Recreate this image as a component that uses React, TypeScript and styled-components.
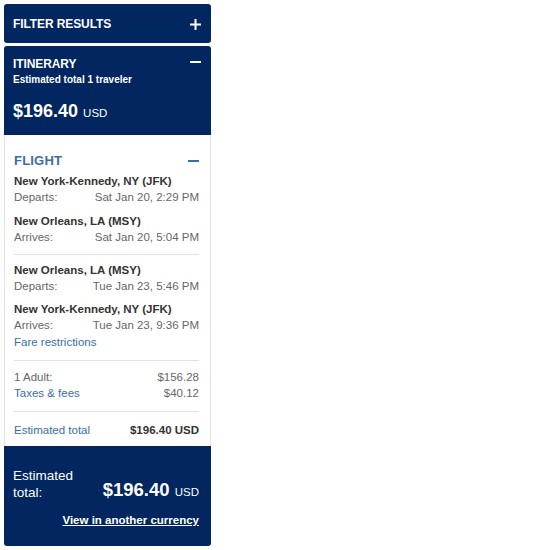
import React from "react";
import styled, { createGlobalStyle } from "styled-components";

const NAVY = "#012660";
const BLUE = "#3a6ea8";

const GlobalStyle = createGlobalStyle`
  html, body {
    margin: 0;
    padding: 0;
    background: #fff;
    font-family: "Liberation Sans", Arial, sans-serif;
  }
`;

interface Leg {
  city: string;
  label: string;
  when: string;
}

const outbound: Leg[] = [
  { city: "New York-Kennedy, NY (JFK)", label: "Departs:", when: "Sat Jan 20, 2:29 PM" },
  { city: "New Orleans, LA (MSY)", label: "Arrives:", when: "Sat Jan 20, 5:04 PM" },
];

const inbound: Leg[] = [
  { city: "New Orleans, LA (MSY)", label: "Departs:", when: "Tue Jan 23, 5:46 PM" },
  { city: "New York-Kennedy, NY (JFK)", label: "Arrives:", when: "Tue Jan 23, 9:36 PM" },
];

const PlusIcon = () => (
  <svg width="11" height="11" viewBox="0 0 11 11">
    <rect x="0" y="4.5" width="11" height="2" fill="currentColor" />
    <rect x="4.5" y="0" width="2" height="11" fill="currentColor" />
  </svg>
);

const MinusIcon = () => (
  <svg width="11" height="2" viewBox="0 0 11 2">
    <rect x="0" y="0" width="11" height="2" fill="currentColor" />
  </svg>
);

const App: React.FC = () => {
  return (
    <Page>
      <GlobalStyle />
      <Sidebar>
        <FilterBar>
          <BarTitle>FILTER RESULTS</BarTitle>
          <Toggle>
            <PlusIcon />
          </Toggle>
        </FilterBar>

        <Card>
          <CardHead>
            <HeadRow>
              <BarTitle>ITINERARY</BarTitle>
              <Toggle $offset={5}>
                <MinusIcon />
              </Toggle>
            </HeadRow>
            <Sub>Estimated total 1 traveler</Sub>
            <Price>
              $196.40 <Currency>USD</Currency>
            </Price>
          </CardHead>

          <Body>
            <HeadRow>
              <SectionTitle>FLIGHT</SectionTitle>
              <Toggle $blue $offset={1}>
                <MinusIcon />
              </Toggle>
            </HeadRow>

            {outbound.map((leg, i) => (
              <LegBlock key={"o" + i} $gap={i === 0 ? 4 : 8}>
                <City>{leg.city}</City>
                <Line>
                  <Label>{leg.label}</Label>
                  <Value>{leg.when}</Value>
                </Line>
              </LegBlock>
            ))}
            <Divider $gap={9} />
            {inbound.map((leg, i) => (
              <LegBlock key={"i" + i} $gap={7}>
                <City>{leg.city}</City>
                <Line>
                  <Label>{leg.label}</Label>
                  <Value>{leg.when}</Value>
                </Line>
              </LegBlock>
            ))}
            <FareLink>Fare restrictions</FareLink>
            <Divider $gap={10} />
            <Costs>
              <Line>
                <Label>1 Adult:</Label>
                <Value>$156.28</Value>
              </Line>
              <Line>
                <Label $blue>Taxes &amp; fees</Label>
                <Value>$40.12</Value>
              </Line>
            </Costs>
            <Divider $gap={10} />
            <TotalLine>
              <Label $blue>Estimated total</Label>
              <TotalValue>$196.40 USD</TotalValue>
            </TotalLine>
          </Body>

          <Footer>
            <FooterRow>
              <FooterLabel>
                Estimated
                <br />
                total:
              </FooterLabel>
              <FooterPrice>
                $196.40 <Currency>USD</Currency>
              </FooterPrice>
            </FooterRow>
            <CurrencyLink>View in another currency</CurrencyLink>
          </Footer>
        </Card>
      </Sidebar>
    </Page>
  );
};

export default App;

const Page = styled.div`
  padding: 4px;
`;

const Sidebar = styled.div`
  width: 207px;
  display: flex;
  flex-direction: column;
  gap: 3px;
`;

const FilterBar = styled.div`
  height: 39px;
  background: ${NAVY};
  border-radius: 3px;
  display: flex;
  align-items: center;
  justify-content: space-between;
  padding: 1px 10px 0 9px;
  box-sizing: border-box;
  color: #fff;
`;

const BarTitle = styled.div`
  font-size: 12px;
  font-weight: bold;
  line-height: 16px;
  color: #fff;
  letter-spacing: -0.1px;
`;

const Toggle = styled.div<{ $blue?: boolean; $offset?: number }>`
  display: flex;
  align-items: center;
  color: ${(p) => (p.$blue ? BLUE : "#fff")};
  margin-top: ${(p) => (p.$offset ? `-${p.$offset}px` : "0")};
`;

const Card = styled.div`
  border-radius: 3px;
  overflow: hidden;
`;

const CardHead = styled.div`
  background: ${NAVY};
  color: #fff;
  padding: 10px 10px 10px 9px;
`;

const HeadRow = styled.div`
  display: flex;
  align-items: center;
  justify-content: space-between;
`;

const Sub = styled.div`
  font-size: 10px;
  font-weight: bold;
  line-height: 14px;
  margin-top: 1px;
`;

const Price = styled.div`
  margin-top: 12px;
  font-size: 18px;
  font-weight: bold;
  line-height: 24px;
  color: #fff;
  white-space: nowrap;
`;

const Currency = styled.span`
  font-size: 11.5px;
  font-weight: normal;
`;

const Body = styled.div`
  background: #fff;
  border-left: 1px solid #e2e2e2;
  border-right: 1px solid #e2e2e2;
  padding: 18px 11px 8px 9px;
`;

const SectionTitle = styled.div`
  font-size: 13px;
  font-weight: bold;
  line-height: 16px;
  color: ${BLUE};
  letter-spacing: 0.2px;
`;

const LegBlock = styled.div<{ $gap: number }>`
  margin-top: ${(p) => p.$gap}px;
`;

const City = styled.div`
  font-size: 11.5px;
  font-weight: bold;
  line-height: 16px;
  color: #333;
`;

const Line = styled.div`
  display: flex;
  justify-content: space-between;
  font-size: 11.5px;
  line-height: 16px;
`;

const Label = styled.span<{ $blue?: boolean }>`
  color: ${(p) => (p.$blue ? BLUE : "#666")};
`;

const Value = styled.span`
  color: #666;
`;

const FareLink = styled.div`
  font-size: 11.5px;
  line-height: 16px;
  margin-top: 1px;
  color: ${BLUE};
`;

const Divider = styled.div<{ $gap: number }>`
  height: 1px;
  background: #e3e3e3;
  margin-top: ${(p) => p.$gap}px;
`;

const Costs = styled.div`
  margin-top: 8px;
`;

const TotalLine = styled(Line)`
  margin-top: 10px;
`;

const TotalValue = styled.span`
  font-weight: bold;
  color: #333;
`;

const Footer = styled.div`
  background: ${NAVY};
  color: #fff;
  padding: 21px 12px 18px 9px;
  display: flex;
  flex-direction: column;
`;

const FooterRow = styled.div`
  display: flex;
  align-items: flex-end;
  justify-content: space-between;
`;

const FooterPrice = styled(Price)`
  margin-top: 0;
  margin-bottom: -3px;
  font-size: 18.5px;
`;

const FooterLabel = styled.div`
  font-size: 13.5px;
  line-height: 17px;
`;

const CurrencyLink = styled.a`
  align-self: flex-end;
  margin-top: 11px;
  font-size: 11.5px;
  font-weight: bold;
  line-height: 16px;
  color: #fff;
  text-decoration: underline;
  cursor: pointer;
`;
